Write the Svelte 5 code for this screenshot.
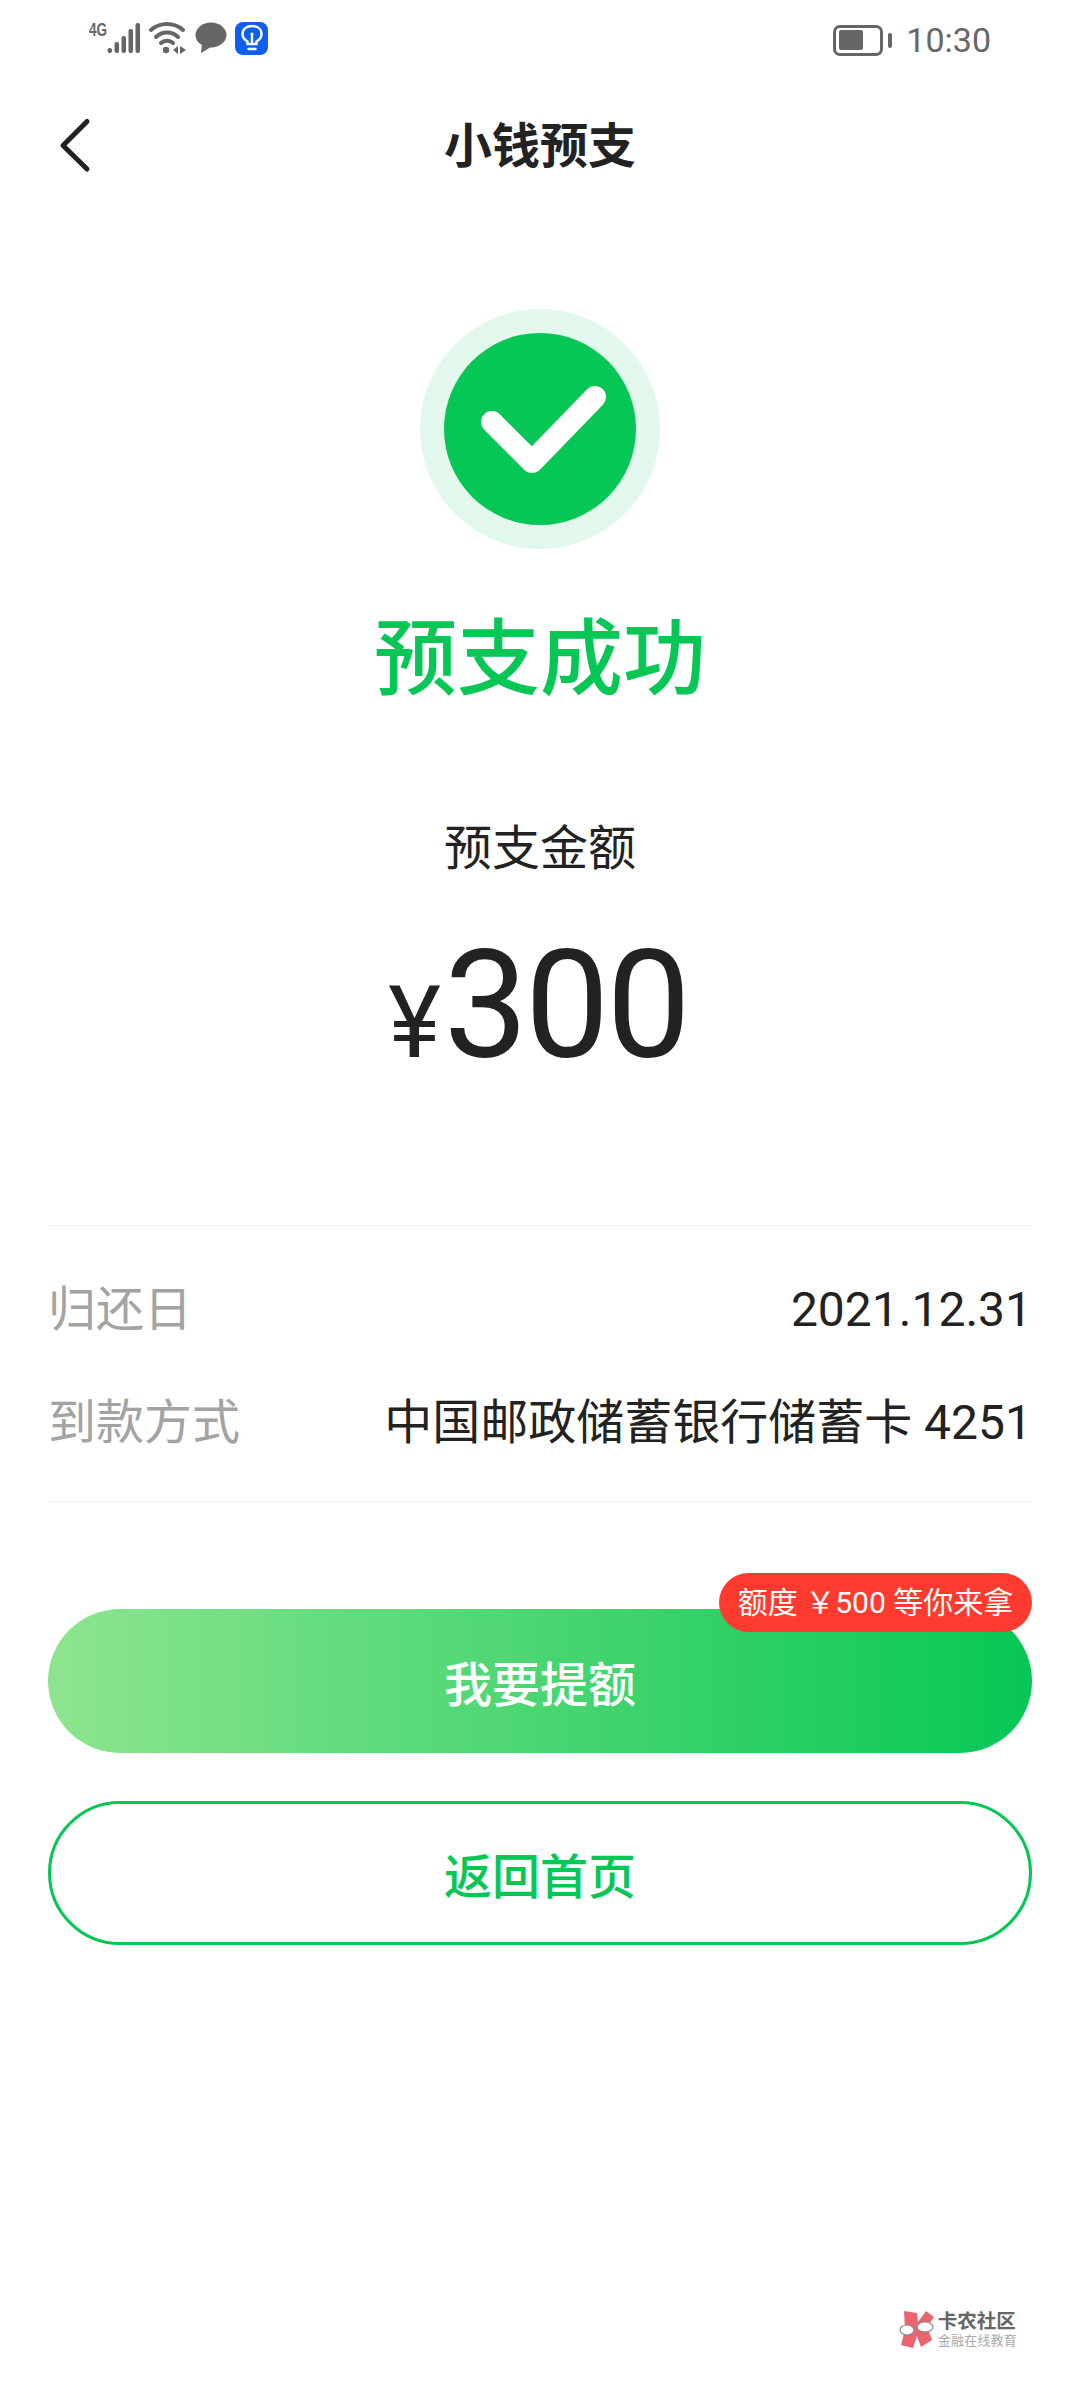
<script lang="ts">
    const rows = [
        { label: '归还日', value: '2021.12.31' },
        { label: '到款方式', value: '中国邮政储蓄银行储蓄卡 4251' }
    ];
    const bars = [
        { x: 18.5, h: 5 },
        { x: 25.5, h: 11 },
        { x: 32.5, h: 17 },
        { x: 39.5, h: 24 },
        { x: 46.5, h: 30 }
    ];
</script>

<div class="page">
    <div class="statusbar">
        <div class="status-left">
            <svg width="52" height="40" viewBox="0 -4 52 40">
                <text x="0" y="14" class="net" textLength="18" lengthAdjust="spacingAndGlyphs">4G</text>
                {#each bars as bar}
                    <rect x={bar.x} y={31 - bar.h} width="4.5" height={bar.h} rx="2" fill="#666" />
                {/each}
            </svg>
            <svg width="38" height="32" viewBox="0 0 38 32" fill="none" stroke="#666" stroke-width="4" stroke-linecap="round">
                <path d="M2 8 C11 0 25 0 34 8" />
                <path d="M7 15 C13 9 23 9 29 15" />
                <path d="M12 21 C15 18 21 18 24 21" />
                <circle cx="17" cy="28" r="3.2" fill="#666" stroke="none" />
                <path d="M24 28 l5 -4 v8 z M31 24 l6 4 l-6 4 z" fill="#666" stroke="none" />
            </svg>
            <svg width="32" height="32" viewBox="0 0 32 32">
                <ellipse cx="16" cy="13" rx="15.5" ry="12.5" fill="#666" />
                <path d="M7 21 L6 31 L16 25 Z" fill="#666" />
            </svg>
            <div class="bulb">
                <svg width="24" height="28" viewBox="0 0 24 28" fill="none" stroke="#fff" stroke-width="2.4" stroke-linecap="round">
                    <path d="M7.5 20 V17.5 C4 15.5 2.5 13 2.5 10 C2.5 5 6.5 2 12 2 C17.5 2 21.5 5 21.5 10 C21.5 13 20 15.5 16.5 17.5 V20 Z" />
                    <path d="M12 12 V19" />
                    <circle cx="12" cy="10" r="1.6" fill="#fff" stroke="none" />
                    <path d="M8.5 25 H15.5" />
                </svg>
            </div>
        </div>
        <div class="status-right">
            <div class="battery">
                <div class="battery__body"><div class="battery__fill"></div></div>
                <div class="battery__cap"></div>
            </div>
            <span class="time">10:30</span>
        </div>
    </div>

    <header class="nav">
        <button class="nav__back" type="button" aria-label="返回">
            <svg width="36" height="60" viewBox="0 0 36 60" fill="none">
                <path d="M29 4.5 L5 28.5 L29 52" stroke="#222" stroke-width="5" stroke-linecap="round" stroke-linejoin="round" />
            </svg>
        </button>
        <h1>小钱预支</h1>
    </header>

    <section class="result">
        <div class="tick">
            <div class="tick__inner">
                <svg width="192" height="192" viewBox="0 0 192 192" fill="none">
                    <path d="M48 89 L88 129 L151 64" stroke="#fff" stroke-width="22" stroke-linecap="round" stroke-linejoin="round" />
                </svg>
            </div>
        </div>
        <h2>预支成功</h2>
        <p class="amount-label">预支金额</p>
        <p class="amount"><span class="amount__sign">¥</span>300</p>
    </section>

    <section class="details">
        {#each rows as row}
            <div class="row">
                <span class="row__label">{row.label}</span>
                <span class="row__value">{row.value}</span>
            </div>
        {/each}
    </section>

    <div class="actions">
        <button class="btn btn--primary" type="button">
            我要提额
            <span class="badge">额度 ￥500 等你来拿</span>
        </button>
        <button class="btn btn--outline" type="button">返回首页</button>
    </div>

    <footer class="mark">
        <svg width="36" height="40" viewBox="0 0 36 40">
            <path d="M5 1 L18 3 L19 12 L27 1 L35 7 L28 17 L33 30 L22 37 L18 26 L14 38 L2 35 L6 20 Z" fill="#e9646f" />
            <ellipse cx="8" cy="20" rx="7" ry="5" fill="#fff" stroke="#8a8a8a" stroke-width="1.2" />
            <ellipse cx="26" cy="17" rx="8" ry="5" fill="#fff" stroke="#8a8a8a" stroke-width="1.2" />
        </svg>
        <div class="mark__text">
            <span class="mark__name">卡农社区</span>
            <span class="mark__sub">金融在线教育</span>
        </div>
    </footer>
</div>

<style>
    :global(body) {
        margin: 0;
        background: #fff;
    }

    .page {
        display: flex;
        flex-direction: column;
        height: 2400px;
        box-sizing: border-box;
        padding: 0 48px;
        background: #fff;
        color: #222;
        font-family: Roboto, "Noto Sans CJK SC", sans-serif;
    }

    .statusbar {
        display: flex;
        align-items: center;
        justify-content: space-between;
        height: 80px;
        padding: 0 41px;
        flex: none;
    }

    .status-left {
        display: flex;
        align-items: center;
        gap: 8px;
        margin-top: -4px;
    }

    .net {
        fill: #666;
        font-family: "Liberation Sans", sans-serif;
        font-size: 18px;
        font-weight: 700;
    }

    .bulb {
        display: grid;
        place-items: center;
        width: 33px;
        height: 33px;
        border-radius: 8px;
        background: #0e5ef0;
    }

    .status-right {
        display: flex;
        align-items: center;
        gap: 14px;
    }

    .battery {
        display: flex;
        align-items: center;
        gap: 5px;
    }

    .battery__body {
        box-sizing: border-box;
        width: 50px;
        height: 31px;
        padding: 2.5px 3px;
        border: 3px solid #666;
        border-radius: 7px;
    }

    .battery__fill {
        width: 24px;
        height: 100%;
        border-radius: 2px;
        background: #666;
    }

    .battery__cap {
        width: 4px;
        height: 15px;
        border-radius: 2px;
        background: #666;
    }

    .time {
        color: #666;
        font-size: 34px;
        line-height: 40px;
    }

    .nav {
        position: relative;
        display: flex;
        align-items: center;
        justify-content: center;
        height: 134px;
        flex: none;
    }

    .nav__back {
        position: absolute;
        left: 10px;
        top: 37px;
        padding: 0;
        border: 0;
        background: none;
    }

    h1 {
        margin: 0;
        font-size: 48px;
        font-weight: 700;
        line-height: 1;
    }

    .result {
        display: flex;
        flex-direction: column;
        align-items: center;
        flex: none;
        padding-top: 95px;
        height: 1012px;
        box-sizing: border-box;
        border-bottom: 1px solid #ededed;
    }

    .tick {
        display: grid;
        place-items: center;
        width: 240px;
        height: 240px;
        border-radius: 50%;
        background: #e2f8ec;
    }

    .tick__inner {
        display: grid;
        place-items: center;
        width: 192px;
        height: 192px;
        border-radius: 50%;
        background: #06c755;
    }

    h2 {
        margin: 61px 0 0;
        color: #06c755;
        font-size: 83px;
        font-weight: 500;
        line-height: 100px;
    }

    .amount-label {
        margin: 109px 0 0;
        font-size: 48px;
        line-height: 60px;
    }

    .amount {
        margin: 52px 0 0;
        padding-right: 4px;
        font-size: 150px;
        letter-spacing: -3px;
        line-height: 150px;
    }

    .amount__sign {
        margin-right: 6px;
        font-size: 100px;
    }

    .details {
        display: flex;
        flex-direction: column;
        justify-content: center;
        gap: 53px;
        box-sizing: border-box;
        height: 276px;
        padding-top: 6px;
        flex: none;
        border-bottom: 1px solid #ededed;
    }

    .row {
        display: flex;
        justify-content: space-between;
        align-items: baseline;
        height: 60px;
        font-size: 48px;
        line-height: 60px;
    }

    .row__label {
        color: #a3a3a3;
    }

    .actions {
        display: flex;
        flex-direction: column;
        gap: 48px;
        margin-top: 107px;
        flex: none;
    }

    .btn {
        position: relative;
        width: 100%;
        height: 144px;
        padding: 0;
        border-radius: 72px;
        font-family: inherit;
        font-size: 48px;
        font-weight: 500;
    }

    .btn--primary {
        border: 0;
        background: linear-gradient(90deg, #8de58e, #06c755);
        color: #fff;
    }

    .btn--outline {
        border: 3px solid #06c755;
        background: #fff;
        color: #06c755;
    }

    .badge {
        position: absolute;
        top: -36px;
        right: 0;
        box-sizing: border-box;
        width: 313px;
        height: 59px;
        border-radius: 30px;
        background: #ff3b30;
        color: #fff;
        font-size: 30px;
        font-weight: 400;
        line-height: 59px;
        text-align: center;
        white-space: nowrap;
    }

    .mark {
        display: flex;
        align-self: flex-end;
        align-items: center;
        gap: 3px;
        margin-top: auto;
        margin-bottom: 50px;
        margin-right: 15px;
        flex: none;
    }

    .mark__text {
        display: flex;
        flex-direction: column;
        gap: 2px;
    }

    .mark__name {
        color: #666;
        font-size: 19.5px;
        font-weight: 700;
        line-height: 20px;
    }

    .mark__sub {
        color: #aaa;
        font-size: 13px;
        letter-spacing: 0.2px;
        line-height: 14px;
    }
</style>
